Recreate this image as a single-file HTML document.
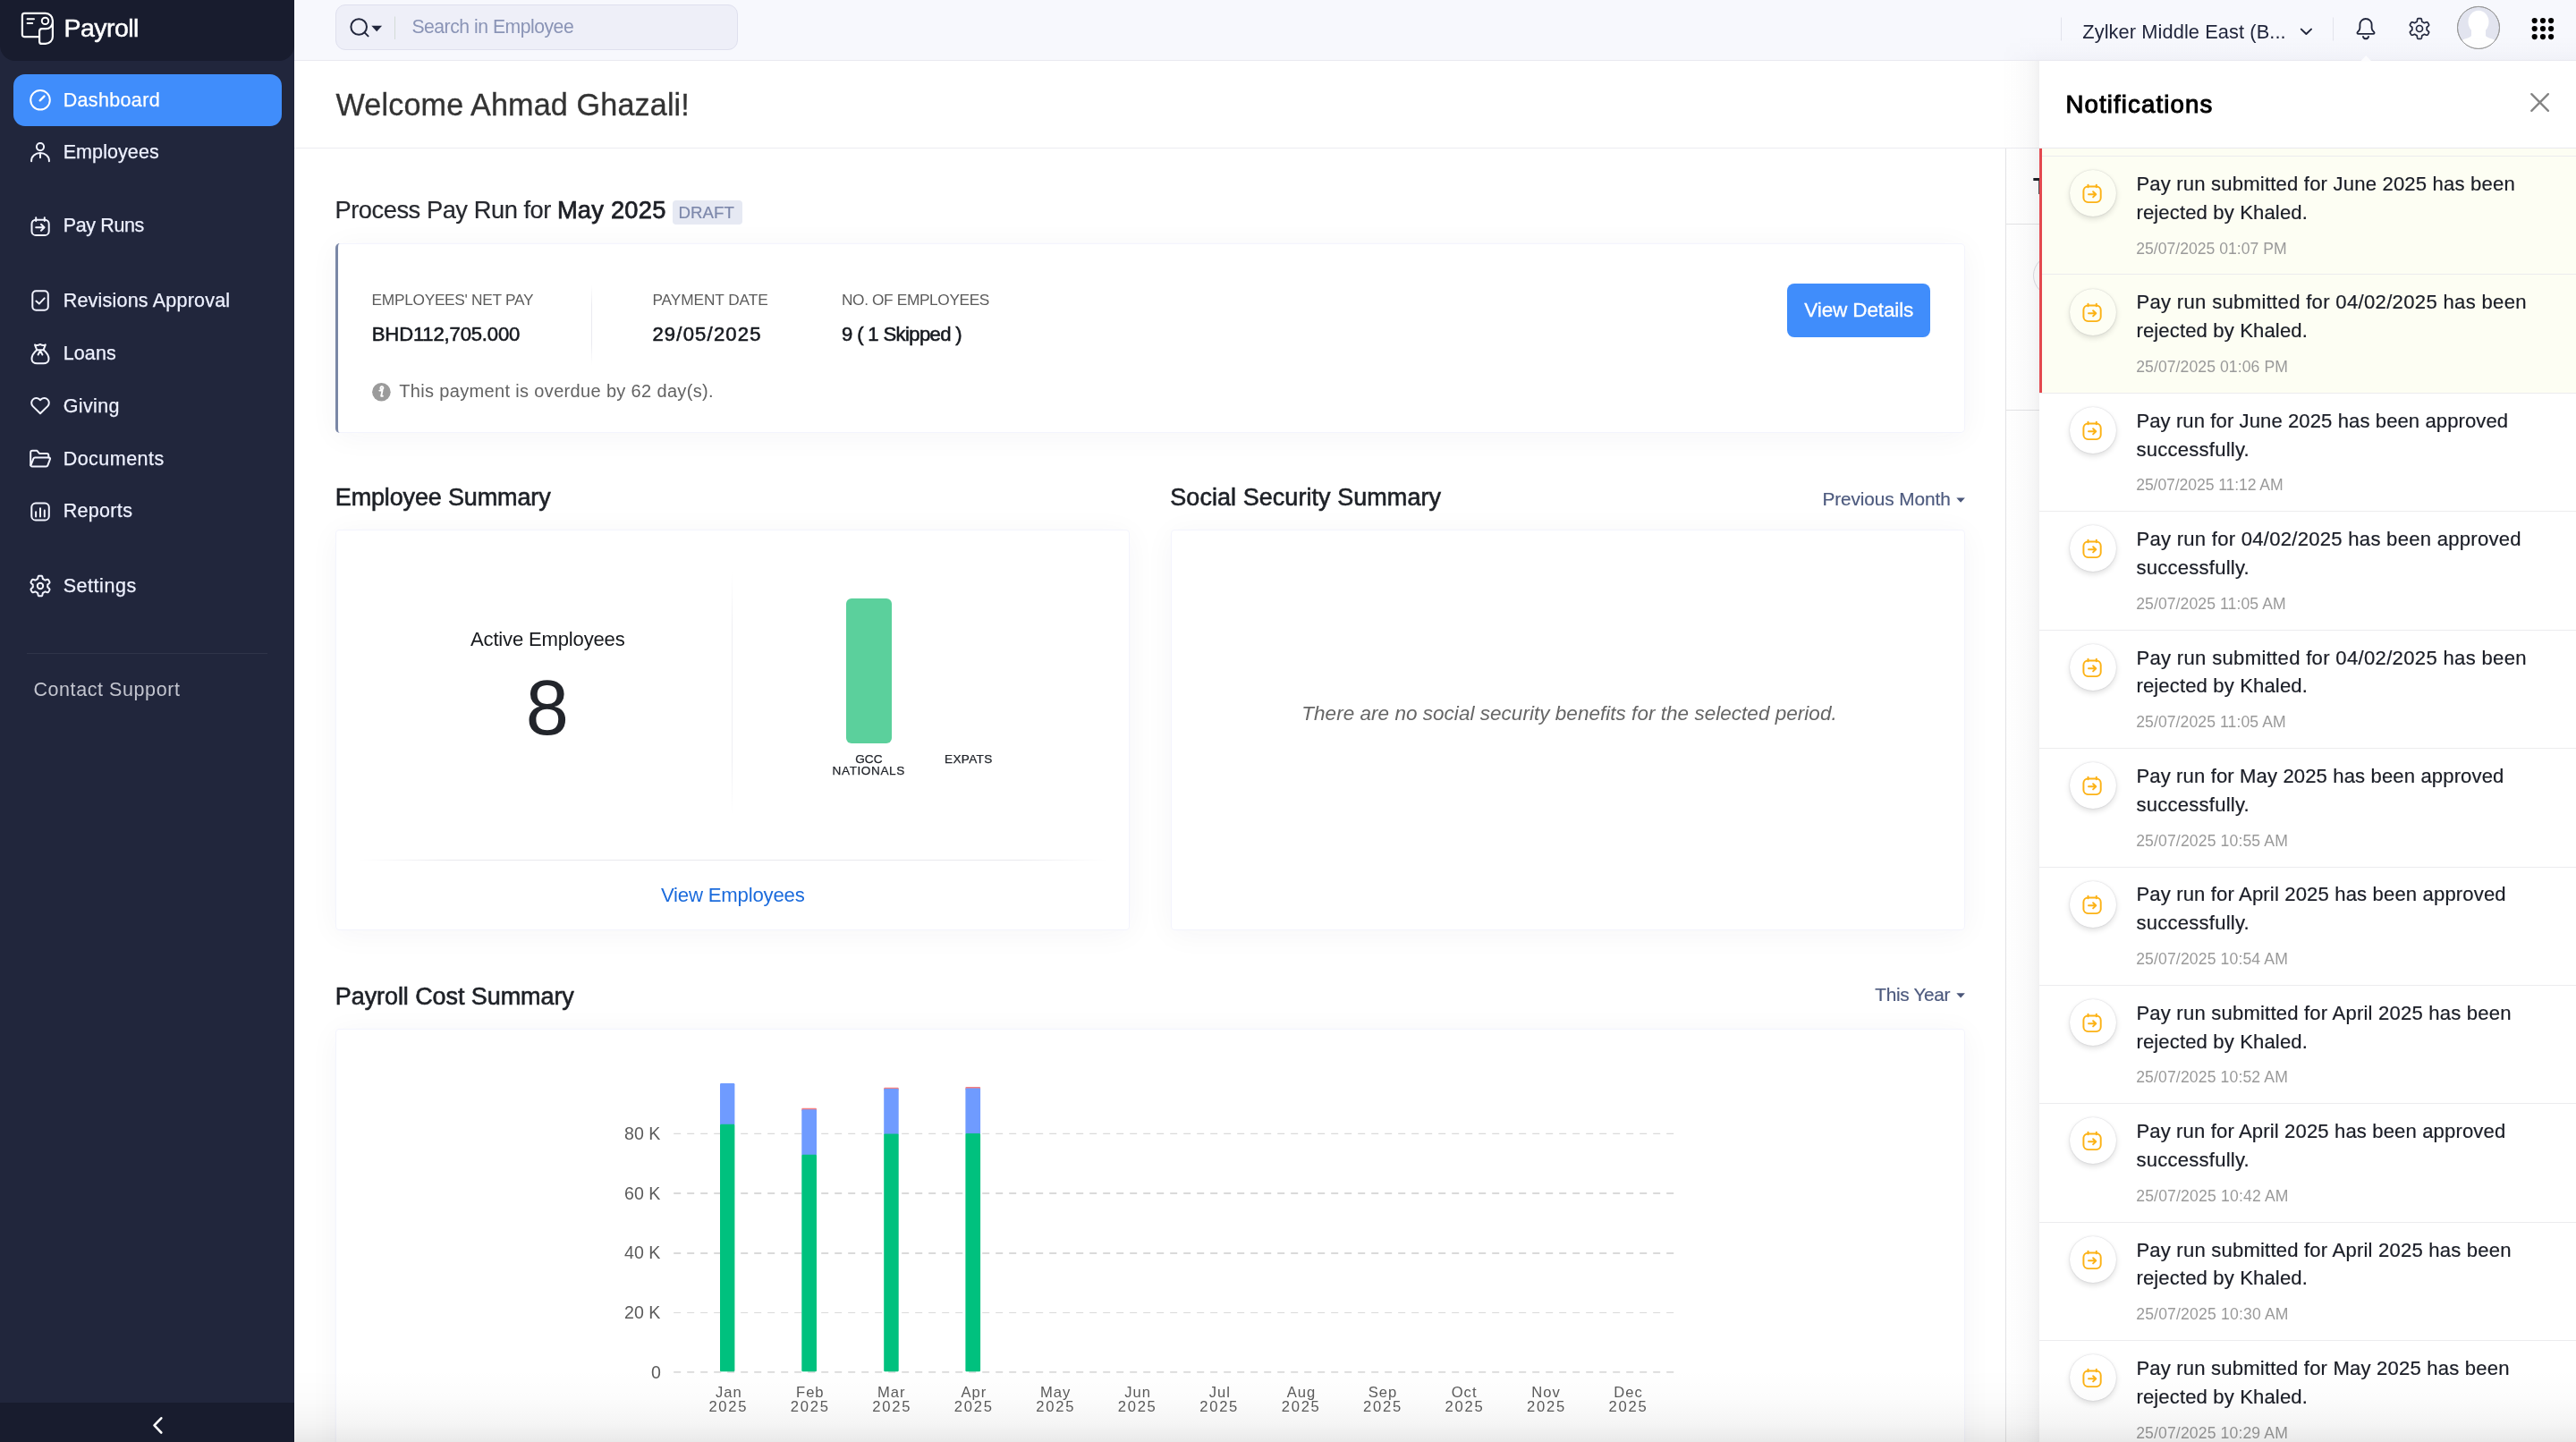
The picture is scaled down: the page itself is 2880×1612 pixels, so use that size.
<!DOCTYPE html>
<html lang="en">
<head>
<meta charset="utf-8">
<title>Payroll - Dashboard</title>
<style>
*{box-sizing:border-box}
html,body{margin:0;padding:0}
body{position:relative;width:2880px;height:1612px;overflow:hidden;background:#fff;color:#21263c;font-family:"Liberation Sans",sans-serif;font-size:22px}
.app{position:absolute;left:0;top:0;width:2880px;height:1612px;overflow:hidden;will-change:transform}
.t{position:absolute;white-space:nowrap;line-height:1;margin:0;padding:0;font-weight:400;display:block}
.b{position:absolute;display:block}
svg{position:absolute;left:0;top:0;overflow:visible}
nav,header,main,aside,section,ul,li,h1,h2,h3,p,a,button{margin:0;padding:0;list-style:none;border:0;background:none;font:inherit;text-decoration:none}
.card{position:absolute;background:#fff;border:1px solid #f3f4fd;border-radius:4px;box-shadow:0 4px 34px rgba(40,44,80,.045)}
</style>
</head>
<body>
<div class="app">
<main>
<div class="b" style="left:329px;top:68px;width:2551px;height:1544px;background:#fff"></div>
<header><h1 class="t" style="left:375.6px;top:100px;font-size:34.2px;letter-spacing:0.12px;-webkit-text-stroke:0.3px currentColor;color:#333333;">Welcome Ahmad Ghazali!</h1><div class="b" style="left:329px;top:165px;width:2551px;height:1px;background:#ececf1"></div></header>
<aside><div class="b" style="left:2242px;top:166px;width:1px;height:1446px;background:#e4e4e6"></div><div class="b" style="left:2243px;top:250px;width:637px;height:1px;background:#e4e4e6"></div><div class="b" style="left:2243px;top:458px;width:637px;height:1px;background:#e4e4e6"></div><div class="b" style="left:2273px;top:285px;width:46px;height:46px;border:1px solid #dcdce2;border-radius:50%"></div><h2 class="t" style="left:2273.0px;top:195px;font-size:26.6px;font-weight:700;color:#1d2026;">To Do Tasks</h2></aside>
<section><h2 class="t" style="left:374.4px;top:221px;font-size:27.3px;letter-spacing:-0.46px;-webkit-text-stroke:0.2px currentColor;color:#26282e;">Process Pay Run for</h2><h2 class="t" style="left:622.9px;top:221px;font-size:27.3px;letter-spacing:0.23px;-webkit-text-stroke:0.75px currentColor;color:#1d1f25;">May 2025</h2><div class="b" style="left:752px;top:224px;width:78px;height:27px;background:#e6e9f3;border-radius:4px"></div><span class="t" style="left:758.6px;top:229px;font-size:18.7px;-webkit-text-stroke:0.2px currentColor;color:#7d88ab;">DRAFT</span><div class="card" style="left:375px;top:271.5px;width:1821.5px;height:212px;border-radius:5px;border-left:0"></div><div class="b" style="left:375px;top:271.5px;width:8px;height:212px;border-left:3px solid #7a87a6;border-radius:5px 0 0 5px"></div><span class="t" style="left:415.6px;top:327px;font-size:17.3px;letter-spacing:-0.29px;color:#5b5b5b;">EMPLOYEES&#x27; NET PAY</span><span class="t" style="left:415.8px;top:363px;font-size:22.1px;letter-spacing:-0.18px;-webkit-text-stroke:0.55px currentColor;color:#16191f;">BHD112,705.000</span><div class="b" style="left:661px;top:318px;width:1px;height:90px;background:linear-gradient(180deg,#fff,#ebebf0 25%,#ebebf0 75%,#fff)"></div><span class="t" style="left:729.4px;top:327px;font-size:17.3px;letter-spacing:-0.09px;color:#5b5b5b;">PAYMENT DATE</span><span class="t" style="left:729.4px;top:363px;font-size:22.1px;letter-spacing:1.18px;-webkit-text-stroke:0.55px currentColor;color:#16191f;">29/05/2025</span><span class="t" style="left:941.0px;top:327px;font-size:17.3px;letter-spacing:-0.37px;color:#5b5b5b;">NO. OF EMPLOYEES</span><span class="t" style="left:941.0px;top:363px;font-size:22.1px;letter-spacing:-0.64px;-webkit-text-stroke:0.55px currentColor;color:#16191f;">9 ( 1 Skipped )</span><svg width="2880" height="1612" viewBox="0 0 2880 1612"><circle cx="426.4" cy="438.2" r="10.3" fill="#9b9b9b"/><path d="M426.9 432.2a1.5 1.5 0 1 0 .01 0M424.3 436.6h3.2l-1.3 6.2h1.7" fill="none" stroke="#fff" stroke-width="1.9" stroke-linecap="round" stroke-linejoin="round"/></svg><p class="t" style="left:446.3px;top:427px;font-size:20.0px;letter-spacing:0.34px;color:#626262;">This payment is overdue by 62 day(s).</p><a class="b" style="left:1998px;top:317px;width:160px;height:60px;background:#408dfb;border-radius:8px"></a><span class="t" style="left:2017.3px;top:336px;font-size:22.6px;letter-spacing:-0.17px;-webkit-text-stroke:0.3px currentColor;color:#ffffff;">View Details</span></section>
<section><h2 class="t" style="left:374.8px;top:543px;font-size:27.0px;letter-spacing:-0.15px;-webkit-text-stroke:0.6px currentColor;color:#1d2026;">Employee Summary</h2><div class="card" style="left:375px;top:592px;width:887.5px;height:448px"></div><p class="t" style="left:526.0px;top:704px;font-size:22.1px;letter-spacing:-0.19px;color:#17191d;">Active Employees</p><p class="t" style="left:587.8px;top:748px;font-size:86.5px;color:#22252b;">8</p><div class="b" style="left:818px;top:640px;width:1px;height:270px;background:linear-gradient(180deg,#fff,#efeff3 22%,#efeff3 78%,#fff)"></div><div class="b" style="left:946px;top:668.5px;width:50.5px;height:162px;background:#5bd09c;border-radius:6px"></div><span class="t" style="left:956.2px;top:842px;font-size:13.6px;letter-spacing:0.05px;-webkit-text-stroke:0.25px currentColor;color:#22252b;">GCC</span><span class="t" style="left:930.6px;top:855px;font-size:13.6px;letter-spacing:0.58px;-webkit-text-stroke:0.25px currentColor;color:#22252b;">NATIONALS</span><span class="t" style="left:1056.1px;top:842px;font-size:13.6px;letter-spacing:0.32px;-webkit-text-stroke:0.25px currentColor;color:#22252b;">EXPATS</span><div class="b" style="left:400px;top:961px;width:838px;height:1px;background:linear-gradient(90deg,#fff,#e9e9ee 12%,#e9e9ee 88%,#fff)"></div><a class="t" style="left:738.9px;top:990px;font-size:22.2px;letter-spacing:-0.21px;color:#1b6bdc;">View Employees</a></section>
<section><h2 class="t" style="left:1308.3px;top:543px;font-size:27.0px;letter-spacing:0.05px;-webkit-text-stroke:0.6px currentColor;color:#1d2026;">Social Security Summary</h2><span class="t" style="left:2037.4px;top:548px;font-size:20.8px;letter-spacing:-0.08px;-webkit-text-stroke:0.2px currentColor;color:#4d5a7e;">Previous Month</span><svg width="2880" height="1612" viewBox="0 0 2880 1612"><path d="M2187.3 556.4h9.6l-4.8 5.3z" fill="#4a5679"/></svg><div class="card" style="left:1308.5px;top:592px;width:888px;height:447.5px"></div><p class="t" style="left:1455.3px;top:787px;font-size:22.5px;font-style:italic;letter-spacing:0.03px;color:#666666;">There are no social security benefits for the selected period.</p></section>
<section><h2 class="t" style="left:374.8px;top:1101px;font-size:27.0px;letter-spacing:-0.08px;-webkit-text-stroke:0.6px currentColor;color:#1d2026;">Payroll Cost Summary</h2><span class="t" style="left:2096.3px;top:1102px;font-size:20.8px;letter-spacing:-0.31px;-webkit-text-stroke:0.2px currentColor;color:#4d5a7e;">This Year</span><svg width="2880" height="1612" viewBox="0 0 2880 1612"><path d="M2187.3 1110.2h9.6l-4.8 5.3z" fill="#4a5679"/></svg><div class="card" style="left:375px;top:1150px;width:1821.5px;height:520px"></div><svg width="2880" height="1612" viewBox="0 0 2880 1612"><path d="M753.2 1267.4H1872" stroke="#dadada" stroke-width="1.2" stroke-dasharray="8 7" fill="none"/><path d="M753.2 1334.0H1872" stroke="#dadada" stroke-width="1.8" stroke-dasharray="8 7" fill="none"/><path d="M753.2 1401.0H1872" stroke="#dadada" stroke-width="1.8" stroke-dasharray="8 7" fill="none"/><path d="M753.2 1467.5H1872" stroke="#dadada" stroke-width="1.2" stroke-dasharray="8 7" fill="none"/><path d="M753.2 1533.9H1872" stroke="#dadada" stroke-width="1.6" stroke-dasharray="8 7" fill="none"/><rect x="805.0" y="1211.1" width="16.4" height="46.6" rx="1.2" fill="#6f9bff"/><rect x="805.0" y="1256.7" width="16.4" height="276.6" rx="1.2" fill="#00c17e"/><rect x="896.3" y="1238.8" width="16.7" height="3.4" rx="1" fill="#f77f80"/><rect x="896.3" y="1240.2" width="16.7" height="51.6" rx="1.2" fill="#6f9bff"/><rect x="896.3" y="1290.8" width="16.7" height="242.5" rx="1.2" fill="#00c17e"/><rect x="988.2" y="1215.7" width="16.5" height="3.2" rx="1" fill="#f77f80"/><rect x="988.2" y="1216.9" width="16.5" height="51.5" rx="1.2" fill="#6f9bff"/><rect x="988.2" y="1267.4" width="16.5" height="265.9" rx="1.2" fill="#00c17e"/><rect x="1079.4" y="1215.0" width="16.7" height="3.6" rx="1" fill="#f77f80"/><rect x="1079.4" y="1216.6" width="16.7" height="51.3" rx="1.2" fill="#6f9bff"/><rect x="1079.4" y="1266.9" width="16.7" height="266.4" rx="1.2" fill="#00c17e"/></svg><span class="t" style="left:698.1px;top:1258px;font-size:19.6px;color:#5b5b5b;">80 K</span><span class="t" style="left:698.1px;top:1325px;font-size:19.6px;color:#5b5b5b;">60 K</span><span class="t" style="left:698.1px;top:1391px;font-size:19.6px;color:#5b5b5b;">40 K</span><span class="t" style="left:698.1px;top:1458px;font-size:19.6px;color:#5b5b5b;">20 K</span><span class="t" style="left:728.1px;top:1525px;font-size:19.6px;color:#5b5b5b;">0</span><span class="t" style="left:800.0px;top:1549px;font-size:16.6px;letter-spacing:1.00px;color:#5b5b5b;">Jan</span><span class="t" style="left:792.4px;top:1565px;font-size:16.6px;letter-spacing:1.75px;color:#5b5b5b;">2025</span><span class="t" style="left:890.0px;top:1549px;font-size:16.6px;letter-spacing:1.00px;color:#5b5b5b;">Feb</span><span class="t" style="left:883.8px;top:1565px;font-size:16.6px;letter-spacing:1.75px;color:#5b5b5b;">2025</span><span class="t" style="left:980.9px;top:1549px;font-size:16.6px;letter-spacing:1.00px;color:#5b5b5b;">Mar</span><span class="t" style="left:975.3px;top:1565px;font-size:16.6px;letter-spacing:1.75px;color:#5b5b5b;">2025</span><span class="t" style="left:1074.4px;top:1549px;font-size:16.6px;letter-spacing:1.00px;color:#5b5b5b;">Apr</span><span class="t" style="left:1066.8px;top:1565px;font-size:16.6px;letter-spacing:1.75px;color:#5b5b5b;">2025</span><span class="t" style="left:1162.9px;top:1549px;font-size:16.6px;letter-spacing:1.00px;color:#5b5b5b;">May</span><span class="t" style="left:1158.3px;top:1565px;font-size:16.6px;letter-spacing:1.75px;color:#5b5b5b;">2025</span><span class="t" style="left:1257.3px;top:1549px;font-size:16.6px;letter-spacing:1.00px;color:#5b5b5b;">Jun</span><span class="t" style="left:1249.7px;top:1565px;font-size:16.6px;letter-spacing:1.75px;color:#5b5b5b;">2025</span><span class="t" style="left:1351.8px;top:1549px;font-size:16.6px;letter-spacing:1.00px;color:#5b5b5b;">Jul</span><span class="t" style="left:1341.2px;top:1565px;font-size:16.6px;letter-spacing:1.75px;color:#5b5b5b;">2025</span><span class="t" style="left:1438.8px;top:1549px;font-size:16.6px;letter-spacing:1.00px;color:#5b5b5b;">Aug</span><span class="t" style="left:1432.7px;top:1565px;font-size:16.6px;letter-spacing:1.75px;color:#5b5b5b;">2025</span><span class="t" style="left:1529.8px;top:1549px;font-size:16.6px;letter-spacing:1.00px;color:#5b5b5b;">Sep</span><span class="t" style="left:1524.1px;top:1565px;font-size:16.6px;letter-spacing:1.75px;color:#5b5b5b;">2025</span><span class="t" style="left:1622.7px;top:1549px;font-size:16.6px;letter-spacing:1.00px;color:#5b5b5b;">Oct</span><span class="t" style="left:1615.6px;top:1565px;font-size:16.6px;letter-spacing:1.75px;color:#5b5b5b;">2025</span><span class="t" style="left:1712.2px;top:1549px;font-size:16.6px;letter-spacing:1.00px;color:#5b5b5b;">Nov</span><span class="t" style="left:1707.1px;top:1565px;font-size:16.6px;letter-spacing:1.75px;color:#5b5b5b;">2025</span><span class="t" style="left:1804.2px;top:1549px;font-size:16.6px;letter-spacing:1.00px;color:#5b5b5b;">Dec</span><span class="t" style="left:1798.5px;top:1565px;font-size:16.6px;letter-spacing:1.75px;color:#5b5b5b;">2025</span></section>
</main>
<header><div class="b" style="left:329px;top:0;width:2551px;height:68px;background:#f7f8fd;border-bottom:1px solid #e9e9f0"></div><div class="b" style="left:375px;top:5px;width:449.5px;height:51px;background:#eeeff8;border:1px solid #dfe0ee;border-radius:11px"></div><svg width="2880" height="68" viewBox="0 0 2880 68"><circle cx="401.2" cy="30" r="8.8" fill="none" stroke="#21263c" stroke-width="2"/><path d="M407.6 36.4l4 4" stroke="#21263c" stroke-width="2" stroke-linecap="round"/><path d="M415.3 28.8h11.8l-5.9 6.5z" fill="#21263c"/><path d="M441.5 18.5v25.5" stroke="#d3dbd6" stroke-width="1"/><path d="M2304.5 19.5v26M2608.5 19.5v26" stroke="#e2e3ec" stroke-width="1"/><path d="M2572.8 32.6l5.6 5.4 5.6-5.4" fill="none" stroke="#21263c" stroke-width="2" stroke-linecap="round" stroke-linejoin="round"/><path d="M2645 21a6.6 6.6 0 0 0-6.6 6.6v3.6c0 2.3-1.4 3.4-2.6 4.7-.8.9-.3 2 .9 2h16.6c1.2 0 1.7-1.1.9-2-1.2-1.3-2.600-2.400-2.600-4.700v-3.600a6.600 6.600 0 0 0-6.600-6.600z" fill="none" stroke="#21263c" stroke-width="1.85" stroke-linejoin="round"/><path d="M2642 40.9a3.1 3.1 0 0 0 6 0" fill="none" stroke="#21263c" stroke-width="2" stroke-linecap="round"/><path d="M2705.00 20.60 L2705.20 20.60 L2705.40 20.61 L2705.60 20.62 L2705.80 20.63 L2705.99 20.64 L2706.19 20.66 L2706.39 20.68 L2706.59 20.71 L2706.78 20.76 L2706.96 20.89 L2707.12 21.10 L2707.26 21.39 L2707.37 21.74 L2707.46 22.13 L2707.54 22.53 L2707.60 22.94 L2707.65 23.33 L2707.70 23.68 L2707.77 23.97 L2707.84 24.19 L2707.94 24.33 L2708.07 24.40 L2708.20 24.45 L2708.34 24.51 L2708.47 24.57 L2708.59 24.63 L2708.72 24.69 L2708.85 24.76 L2708.98 24.83 L2709.10 24.90 L2709.22 24.97 L2709.35 25.05 L2709.47 25.12 L2709.59 25.20 L2709.70 25.28 L2709.82 25.37 L2709.93 25.45 L2710.05 25.54 L2710.17 25.61 L2710.34 25.63 L2710.57 25.59 L2710.86 25.50 L2711.18 25.37 L2711.55 25.22 L2711.93 25.07 L2712.32 24.93 L2712.70 24.82 L2713.06 24.74 L2713.38 24.72 L2713.65 24.75 L2713.85 24.84 L2713.98 24.98 L2714.10 25.14 L2714.22 25.30 L2714.34 25.46 L2714.45 25.63 L2714.56 25.79 L2714.67 25.96 L2714.77 26.13 L2714.87 26.30 L2714.97 26.47 L2715.07 26.65 L2715.16 26.82 L2715.25 27.00 L2715.33 27.18 L2715.41 27.36 L2715.49 27.55 L2715.57 27.73 L2715.63 27.92 L2715.60 28.14 L2715.50 28.39 L2715.32 28.65 L2715.07 28.92 L2714.78 29.19 L2714.47 29.46 L2714.14 29.72 L2713.83 29.96 L2713.56 30.18 L2713.34 30.38 L2713.19 30.56 L2713.12 30.71 L2713.12 30.86 L2713.14 31.00 L2713.16 31.14 L2713.17 31.29 L2713.18 31.43 L2713.19 31.57 L2713.20 31.71 L2713.20 31.86 L2713.20 32.00 L2713.20 32.14 L2713.20 32.29 L2713.19 32.43 L2713.18 32.57 L2713.17 32.71 L2713.16 32.86 L2713.14 33.00 L2713.12 33.14 L2713.12 33.29 L2713.19 33.44 L2713.34 33.62 L2713.56 33.82 L2713.83 34.04 L2714.14 34.28 L2714.47 34.54 L2714.78 34.81 L2715.07 35.08 L2715.32 35.35 L2715.50 35.61 L2715.60 35.86 L2715.63 36.08 L2715.57 36.27 L2715.49 36.45 L2715.41 36.64 L2715.33 36.82 L2715.25 37.00 L2715.16 37.18 L2715.07 37.35 L2714.97 37.53 L2714.87 37.70 L2714.77 37.87 L2714.67 38.04 L2714.56 38.21 L2714.45 38.37 L2714.34 38.54 L2714.22 38.70 L2714.10 38.86 L2713.98 39.02 L2713.85 39.16 L2713.65 39.25 L2713.38 39.28 L2713.06 39.26 L2712.70 39.18 L2712.32 39.07 L2711.93 38.93 L2711.55 38.78 L2711.18 38.63 L2710.86 38.50 L2710.57 38.41 L2710.34 38.37 L2710.17 38.39 L2710.05 38.46 L2709.93 38.55 L2709.82 38.63 L2709.70 38.72 L2709.59 38.80 L2709.47 38.88 L2709.35 38.95 L2709.22 39.03 L2709.10 39.10 L2708.98 39.17 L2708.85 39.24 L2708.72 39.31 L2708.59 39.37 L2708.47 39.43 L2708.34 39.49 L2708.20 39.55 L2708.07 39.60 L2707.94 39.67 L2707.84 39.81 L2707.77 40.03 L2707.70 40.32 L2707.65 40.67 L2707.60 41.06 L2707.54 41.47 L2707.46 41.87 L2707.37 42.26 L2707.26 42.61 L2707.12 42.90 L2706.96 43.11 L2706.78 43.24 L2706.59 43.29 L2706.39 43.32 L2706.19 43.34 L2705.99 43.36 L2705.80 43.37 L2705.60 43.38 L2705.40 43.39 L2705.20 43.40 L2705.00 43.40 L2704.80 43.40 L2704.60 43.39 L2704.40 43.38 L2704.20 43.37 L2704.01 43.36 L2703.81 43.34 L2703.61 43.32 L2703.41 43.29 L2703.22 43.24 L2703.04 43.11 L2702.88 42.90 L2702.74 42.61 L2702.63 42.26 L2702.54 41.87 L2702.46 41.47 L2702.40 41.06 L2702.35 40.67 L2702.30 40.32 L2702.23 40.03 L2702.16 39.81 L2702.06 39.67 L2701.93 39.60 L2701.80 39.55 L2701.66 39.49 L2701.53 39.43 L2701.41 39.37 L2701.28 39.31 L2701.15 39.24 L2701.02 39.17 L2700.90 39.10 L2700.78 39.03 L2700.65 38.95 L2700.53 38.88 L2700.41 38.80 L2700.30 38.72 L2700.18 38.63 L2700.07 38.55 L2699.95 38.46 L2699.83 38.39 L2699.66 38.37 L2699.43 38.41 L2699.14 38.50 L2698.82 38.63 L2698.45 38.78 L2698.07 38.93 L2697.68 39.07 L2697.30 39.18 L2696.94 39.26 L2696.62 39.28 L2696.35 39.25 L2696.15 39.16 L2696.02 39.02 L2695.90 38.86 L2695.78 38.70 L2695.66 38.54 L2695.55 38.37 L2695.44 38.21 L2695.33 38.04 L2695.23 37.87 L2695.13 37.70 L2695.03 37.53 L2694.93 37.35 L2694.84 37.18 L2694.75 37.00 L2694.67 36.82 L2694.59 36.64 L2694.51 36.45 L2694.43 36.27 L2694.37 36.08 L2694.40 35.86 L2694.50 35.61 L2694.68 35.35 L2694.93 35.08 L2695.22 34.81 L2695.53 34.54 L2695.86 34.28 L2696.17 34.04 L2696.44 33.82 L2696.66 33.62 L2696.81 33.44 L2696.88 33.29 L2696.88 33.14 L2696.86 33.00 L2696.84 32.86 L2696.83 32.71 L2696.82 32.57 L2696.81 32.43 L2696.80 32.29 L2696.80 32.14 L2696.80 32.00 L2696.80 31.86 L2696.80 31.71 L2696.81 31.57 L2696.82 31.43 L2696.83 31.29 L2696.84 31.14 L2696.86 31.00 L2696.88 30.86 L2696.88 30.71 L2696.81 30.56 L2696.66 30.38 L2696.44 30.18 L2696.17 29.96 L2695.86 29.72 L2695.53 29.46 L2695.22 29.19 L2694.93 28.92 L2694.68 28.65 L2694.50 28.39 L2694.40 28.14 L2694.37 27.92 L2694.43 27.73 L2694.51 27.55 L2694.59 27.36 L2694.67 27.18 L2694.75 27.00 L2694.84 26.82 L2694.93 26.65 L2695.03 26.47 L2695.13 26.30 L2695.23 26.13 L2695.33 25.96 L2695.44 25.79 L2695.55 25.63 L2695.66 25.46 L2695.78 25.30 L2695.90 25.14 L2696.02 24.98 L2696.15 24.84 L2696.35 24.75 L2696.62 24.72 L2696.94 24.74 L2697.30 24.82 L2697.68 24.93 L2698.07 25.07 L2698.45 25.22 L2698.82 25.37 L2699.14 25.50 L2699.43 25.59 L2699.66 25.63 L2699.83 25.61 L2699.95 25.54 L2700.07 25.45 L2700.18 25.37 L2700.30 25.28 L2700.41 25.20 L2700.53 25.12 L2700.65 25.05 L2700.78 24.97 L2700.90 24.90 L2701.02 24.83 L2701.15 24.76 L2701.28 24.69 L2701.41 24.63 L2701.53 24.57 L2701.66 24.51 L2701.80 24.45 L2701.93 24.40 L2702.06 24.33 L2702.16 24.19 L2702.23 23.97 L2702.30 23.68 L2702.35 23.33 L2702.40 22.94 L2702.46 22.53 L2702.54 22.13 L2702.63 21.74 L2702.74 21.39 L2702.88 21.10 L2703.04 20.89 L2703.22 20.76 L2703.41 20.71 L2703.61 20.68 L2703.81 20.66 L2704.01 20.64 L2704.20 20.63 L2704.40 20.62 L2704.60 20.61 L2704.80 20.60Z" fill="none" stroke="#21263c" stroke-width="1.7" stroke-linejoin="round"/><circle cx="2705" cy="32" r="3.5" fill="none" stroke="#21263c" stroke-width="1.7"/><clipPath id="av"><circle cx="2771" cy="30.9" r="23.4"/></clipPath><circle cx="2771" cy="30.9" r="23.5" fill="#e2e4ef" stroke="#9a9a9a" stroke-width="1"/><g clip-path="url(#av)" fill="#fff"><ellipse cx="2771" cy="24.5" rx="11.5" ry="12.8"/><path d="M2763 32v8c-2 3-9 3-12 6v10h40v-10c-3-3-10-3-12-6v-8z"/></g><circle cx="2771" cy="30.9" r="23.5" fill="none" stroke="#9a9a9a" stroke-width="1"/><circle cx="2833.7" cy="23.1" r="3.1" fill="#000"/><circle cx="2843" cy="23.1" r="3.1" fill="#000"/><circle cx="2852.1" cy="23.1" r="3.1" fill="#000"/><circle cx="2833.7" cy="32.1" r="3.1" fill="#000"/><circle cx="2843" cy="32.1" r="3.1" fill="#000"/><circle cx="2852.1" cy="32.1" r="3.1" fill="#000"/><circle cx="2833.7" cy="41.1" r="3.1" fill="#000"/><circle cx="2843" cy="41.1" r="3.1" fill="#000"/><circle cx="2852.1" cy="41.1" r="3.1" fill="#000"/></svg><span class="t" style="left:460.4px;top:19px;font-size:21.2px;letter-spacing:-0.49px;color:#8a94b6;">Search in Employee</span><span class="t" style="left:2328.3px;top:25px;font-size:21.8px;letter-spacing:0.09px;color:#21263c;">Zylker Middle East (B...</span></header>
<nav><div class="b" style="left:0;top:0;width:329px;height:1612px;background:#21263c"></div><div class="b" style="left:0;top:0;width:329px;height:68px;background:#181c2e;border-radius:0 0 17px 17px"></div><div class="b" style="left:15px;top:83px;width:300px;height:58px;background:#408dfb;border-radius:13px"></div><div class="b" style="left:30px;top:730px;width:269px;height:1px;background:#2f3449"></div><div class="b" style="left:0;top:1568px;width:329px;height:44px;background:#181c2e"></div><svg width="329" height="1612" viewBox="0 0 329 1612" fill="none" stroke="#f2f4ff" stroke-width="2" stroke-linecap="round" stroke-linejoin="round"><g stroke="#fff" stroke-width="2.2"><path d="M44.1 41.2H27.4a2.5 2.5 0 0 1-2.5-2.5V17.4a2.500 2.500 0 0 1 2.500-2.500H50.900a8 8 0 0 1 8 8V40.900a8 8 0 0 1-8 8H46.600a2.500 2.500 0 0 1-2.500-2.500V34.900a2.800 2.800 0 0 1 2.800-2.800H51.400a7.500 7.500 0 0 0 7.500-7.500"/><path d="M30.600 21.300h7.400M30.600 25.900h5.600" stroke-width="2"/><circle cx="50.500" cy="23.400" r="3.700" stroke-width="2"/></g><g stroke="#fff"><circle cx="45" cy="111.8" r="10.8"/><path d="M44.700 112.300l4.800-4.700" stroke-width="2.400"/></g><circle cx="45" cy="164.100" r="4.100"/><path d="M35.100 180.200v-.600a9.900 8.600 0 0 1 19.800 0v.600M45 172.800v3.400"/><rect x="35.500" y="245.700" width="19.200" height="17.300" rx="4.600"/><path d="M40.200 243.200v3.800M49.800 243.200v3.800M40.200 254.300h9M46 250.800l3.500 3.500-3.500 3.500"/><rect x="36.300" y="325.300" width="17.500" height="21.400" rx="4"/><path d="M40.400 336.600l3.400 3 5.900-6.200"/><path d="M41.200 391.200c-3.400 2.900-5.700 6.600-5.700 10.100 0 3 2.500 4.900 6 4.900h7c3.500 0 6-1.900 6-4.900 0-3.500-2.300-7.200-5.700-10.100z"/><path d="M41.200 391.200l-2.200-5.800c1.700.9 3.700.9 5.900-.500 2.200 1.400 4.200 1.400 5.900.500l-2.200 5.800"/><path d="M42.600 396.500l2.400-4.500 2.400 4.500"/><path d="M45 462.300l-8.300-8.200a5.350 5.350 0 0 1 7.550-7.580l.75.750.75-.750a5.350 5.350 0 0 1 7.550 7.580z"/><path d="M34.200 520V505.800a2 2 0 0 1 2-2h5.200l2.600 3.100h8.300a2 2 0 0 1 2 2v2.600"/><path d="M34.300 520.600l3.100-8a1.900 1.900 0 0 1 1.800-1.200h15.600a1.300 1.300 0 0 1 1.200 1.800l-2.600 7a1.900 1.900 0 0 1-1.800 1.200H36.100a1.900 1.900 0 0 1-1.800-1.900z"/><rect x="35.300" y="562.500" width="19.500" height="19" rx="4.600"/><path d="M40.100 572.200v5.300M45 568.300v9.200M49.800 570.400v7.100"/><path d="M45.00 643.70 L45.20 643.70 L45.39 643.71 L45.59 643.72 L45.79 643.73 L45.98 643.74 L46.18 643.76 L46.38 643.78 L46.57 643.81 L46.77 643.85 L46.94 643.98 L47.10 644.18 L47.24 644.45 L47.36 644.78 L47.46 645.15 L47.54 645.53 L47.60 645.92 L47.66 646.29 L47.72 646.61 L47.79 646.89 L47.88 647.10 L47.98 647.24 L48.11 647.30 L48.24 647.36 L48.38 647.42 L48.51 647.48 L48.64 647.54 L48.77 647.60 L48.90 647.67 L49.02 647.74 L49.15 647.81 L49.27 647.89 L49.40 647.96 L49.52 648.04 L49.64 648.12 L49.76 648.20 L49.88 648.29 L50.00 648.37 L50.11 648.46 L50.23 648.54 L50.40 648.56 L50.63 648.53 L50.90 648.45 L51.21 648.34 L51.56 648.20 L51.93 648.07 L52.30 647.95 L52.67 647.85 L53.01 647.79 L53.32 647.77 L53.57 647.81 L53.77 647.90 L53.90 648.04 L54.02 648.20 L54.14 648.36 L54.26 648.52 L54.37 648.68 L54.48 648.85 L54.58 649.01 L54.69 649.18 L54.79 649.35 L54.88 649.52 L54.98 649.69 L55.07 649.87 L55.16 650.05 L55.24 650.22 L55.32 650.40 L55.40 650.58 L55.48 650.77 L55.54 650.96 L55.52 651.17 L55.42 651.41 L55.25 651.67 L55.03 651.93 L54.76 652.20 L54.47 652.46 L54.17 652.71 L53.88 652.95 L53.63 653.17 L53.42 653.36 L53.28 653.54 L53.21 653.70 L53.22 653.84 L53.24 653.99 L53.25 654.13 L53.27 654.28 L53.28 654.42 L53.29 654.57 L53.29 654.71 L53.30 654.86 L53.30 655.00 L53.30 655.14 L53.29 655.29 L53.29 655.43 L53.28 655.58 L53.27 655.72 L53.25 655.87 L53.24 656.01 L53.22 656.16 L53.21 656.30 L53.28 656.46 L53.42 656.64 L53.63 656.83 L53.88 657.05 L54.17 657.29 L54.47 657.54 L54.76 657.80 L55.03 658.07 L55.25 658.33 L55.42 658.59 L55.52 658.83 L55.54 659.04 L55.48 659.23 L55.40 659.42 L55.32 659.60 L55.24 659.78 L55.16 659.95 L55.07 660.13 L54.98 660.31 L54.88 660.48 L54.79 660.65 L54.69 660.82 L54.58 660.99 L54.48 661.15 L54.37 661.32 L54.26 661.48 L54.14 661.64 L54.02 661.80 L53.90 661.96 L53.77 662.10 L53.57 662.19 L53.32 662.23 L53.01 662.21 L52.67 662.15 L52.30 662.05 L51.93 661.93 L51.56 661.80 L51.21 661.66 L50.90 661.55 L50.63 661.47 L50.40 661.44 L50.23 661.46 L50.11 661.54 L50.00 661.63 L49.88 661.71 L49.76 661.80 L49.64 661.88 L49.52 661.96 L49.40 662.04 L49.27 662.11 L49.15 662.19 L49.02 662.26 L48.90 662.33 L48.77 662.40 L48.64 662.46 L48.51 662.52 L48.38 662.58 L48.24 662.64 L48.11 662.70 L47.98 662.76 L47.88 662.90 L47.79 663.11 L47.72 663.39 L47.66 663.71 L47.60 664.08 L47.54 664.47 L47.46 664.85 L47.36 665.22 L47.24 665.55 L47.10 665.82 L46.94 666.02 L46.77 666.15 L46.57 666.19 L46.38 666.22 L46.18 666.24 L45.98 666.26 L45.79 666.27 L45.59 666.28 L45.39 666.29 L45.20 666.30 L45.00 666.30 L44.80 666.30 L44.61 666.29 L44.41 666.28 L44.21 666.27 L44.02 666.26 L43.82 666.24 L43.62 666.22 L43.43 666.19 L43.23 666.15 L43.06 666.02 L42.90 665.82 L42.76 665.55 L42.64 665.22 L42.54 664.85 L42.46 664.47 L42.40 664.08 L42.34 663.71 L42.28 663.39 L42.21 663.11 L42.12 662.90 L42.02 662.76 L41.89 662.70 L41.76 662.64 L41.62 662.58 L41.49 662.52 L41.36 662.46 L41.23 662.40 L41.10 662.33 L40.98 662.26 L40.85 662.19 L40.73 662.11 L40.60 662.04 L40.48 661.96 L40.36 661.88 L40.24 661.80 L40.12 661.71 L40.00 661.63 L39.89 661.54 L39.77 661.46 L39.60 661.44 L39.37 661.47 L39.10 661.55 L38.79 661.66 L38.44 661.80 L38.07 661.93 L37.70 662.05 L37.33 662.15 L36.99 662.21 L36.68 662.23 L36.43 662.19 L36.23 662.10 L36.10 661.96 L35.98 661.80 L35.86 661.64 L35.74 661.48 L35.63 661.32 L35.52 661.15 L35.42 660.99 L35.31 660.82 L35.21 660.65 L35.12 660.48 L35.02 660.31 L34.93 660.13 L34.84 659.95 L34.76 659.78 L34.68 659.60 L34.60 659.42 L34.52 659.23 L34.46 659.04 L34.48 658.83 L34.58 658.59 L34.75 658.33 L34.97 658.07 L35.24 657.80 L35.53 657.54 L35.83 657.29 L36.12 657.05 L36.37 656.83 L36.58 656.64 L36.72 656.46 L36.79 656.30 L36.78 656.16 L36.76 656.01 L36.75 655.87 L36.73 655.72 L36.72 655.58 L36.71 655.43 L36.71 655.29 L36.70 655.14 L36.70 655.00 L36.70 654.86 L36.71 654.71 L36.71 654.57 L36.72 654.42 L36.73 654.28 L36.75 654.13 L36.76 653.99 L36.78 653.84 L36.79 653.70 L36.72 653.54 L36.58 653.36 L36.37 653.17 L36.12 652.95 L35.83 652.71 L35.53 652.46 L35.24 652.20 L34.97 651.93 L34.75 651.67 L34.58 651.41 L34.48 651.17 L34.46 650.96 L34.52 650.77 L34.60 650.58 L34.68 650.40 L34.76 650.22 L34.84 650.05 L34.93 649.87 L35.02 649.69 L35.12 649.52 L35.21 649.35 L35.31 649.18 L35.42 649.01 L35.52 648.85 L35.63 648.68 L35.74 648.52 L35.86 648.36 L35.98 648.20 L36.10 648.04 L36.23 647.90 L36.43 647.81 L36.68 647.77 L36.99 647.79 L37.33 647.85 L37.70 647.95 L38.07 648.07 L38.44 648.20 L38.79 648.34 L39.10 648.45 L39.37 648.53 L39.60 648.56 L39.77 648.54 L39.89 648.46 L40.00 648.37 L40.12 648.29 L40.24 648.20 L40.36 648.12 L40.48 648.04 L40.60 647.96 L40.73 647.89 L40.85 647.81 L40.98 647.74 L41.10 647.67 L41.23 647.60 L41.36 647.54 L41.49 647.48 L41.62 647.42 L41.76 647.36 L41.89 647.30 L42.02 647.24 L42.12 647.10 L42.21 646.89 L42.28 646.61 L42.34 646.29 L42.40 645.92 L42.46 645.53 L42.54 645.15 L42.64 644.78 L42.76 644.45 L42.90 644.18 L43.06 643.98 L43.23 643.85 L43.43 643.81 L43.62 643.78 L43.82 643.76 L44.02 643.74 L44.21 643.73 L44.41 643.72 L44.61 643.71 L44.80 643.70Z" fill="none" stroke="#f2f4ff" stroke-width="2" stroke-linejoin="round"/><circle cx="45" cy="655" r="3.2" fill="none" stroke="#f2f4ff" stroke-width="2"/><path d="M180.300 1585.300l-7.800 8.100 7.800 8.100" stroke="#fff" stroke-width="2.600"/></svg><span class="t" style="left:71.4px;top:17px;font-size:28.5px;letter-spacing:-0.52px;-webkit-text-stroke:0.5px currentColor;color:#ffffff;">Payroll</span><ul><li><a class="t" style="left:70.7px;top:102px;font-size:21.5px;letter-spacing:0.34px;-webkit-text-stroke:0.25px currentColor;color:#ffffff;">Dashboard</a></li><li><a class="t" style="left:70.7px;top:160px;font-size:21.5px;letter-spacing:0.08px;-webkit-text-stroke:0.25px currentColor;color:#eef1ff;">Employees</a></li><li><a class="t" style="left:70.7px;top:242px;font-size:21.5px;letter-spacing:-0.37px;-webkit-text-stroke:0.25px currentColor;color:#eef1ff;">Pay Runs</a></li><li><a class="t" style="left:70.7px;top:326px;font-size:21.5px;letter-spacing:0.21px;-webkit-text-stroke:0.25px currentColor;color:#eef1ff;">Revisions Approval</a></li><li><a class="t" style="left:70.7px;top:385px;font-size:21.5px;letter-spacing:0.12px;-webkit-text-stroke:0.25px currentColor;color:#eef1ff;">Loans</a></li><li><a class="t" style="left:70.7px;top:444px;font-size:21.5px;letter-spacing:0.36px;-webkit-text-stroke:0.25px currentColor;color:#eef1ff;">Giving</a></li><li><a class="t" style="left:70.7px;top:503px;font-size:21.5px;letter-spacing:0.47px;-webkit-text-stroke:0.25px currentColor;color:#eef1ff;">Documents</a></li><li><a class="t" style="left:70.7px;top:561px;font-size:21.5px;letter-spacing:0.32px;-webkit-text-stroke:0.25px currentColor;color:#eef1ff;">Reports</a></li><li><a class="t" style="left:70.7px;top:645px;font-size:21.5px;letter-spacing:0.54px;-webkit-text-stroke:0.25px currentColor;color:#eef1ff;">Settings</a></li></ul><a class="t" style="left:37.4px;top:761px;font-size:21.5px;letter-spacing:0.58px;color:#c3c5cf;">Contact Support</a></nav>
<aside><div class="b" style="left:2236px;top:68px;width:44px;height:1544px;background:linear-gradient(90deg,rgba(20,20,30,0) 0%,rgba(20,20,30,.006) 35%,rgba(20,20,30,.02) 65%,rgba(20,20,30,.04) 88%,rgba(20,20,30,.06) 100%)"></div><div class="b" style="left:2236px;top:40px;width:644px;height:27px;background:linear-gradient(180deg,rgba(20,20,60,0) 0%,rgba(20,20,60,.006) 40%,rgba(20,20,60,.016) 75%,rgba(20,20,60,.028) 100%);-webkit-mask-image:linear-gradient(90deg,transparent 0,#000 44px);mask-image:linear-gradient(90deg,transparent 0,#000 44px)"></div><div class="b" style="left:2280px;top:68px;width:600px;height:1544px;background:#fff"></div><svg width="2880" height="70" viewBox="0 0 2880 70"><path d="M2639 68.500l6.200-6.300 6.200 6.300z" fill="#fcfcfe"/></svg><h2 class="t" style="left:2309.4px;top:103px;font-size:27.6px;letter-spacing:1.14px;-webkit-text-stroke:1.0px currentColor;color:#000000;">Notifications</h2><svg width="2880" height="200" viewBox="0 0 2880 200"><path d="M2830.300 105.200l18.600 18.600M2848.900 105.200l-18.600 18.600" stroke="#858585" stroke-width="2.400" stroke-linecap="round" fill="none"/></svg><div class="b" style="left:2280px;top:165px;width:600px;height:1px;background:#e9e9ee"></div><div class="b" style="left:2280px;top:166px;width:600px;height:273px;background:#fdfef3;border-left:3px solid #e4494f"></div><ul><li><div class="b" style="left:2283px;top:174px;width:600px;height:1px;background:#ececee"></div><div class="b" style="left:2313.5px;top:190px;width:52px;height:52px;border-radius:50%;background:#fdfef4;box-shadow:0 3px 6px rgba(0,0,0,.13),0 0 1.5px rgba(30,30,60,.22)"></div><svg width="2880" height="1612" viewBox="0 0 2880 1612"><g fill="none" stroke="#fcb216" stroke-width="1.95" stroke-linecap="round" stroke-linejoin="round"><rect x="2329.40" y="208.50" width="19.3" height="17.6" rx="5"/><path d="M2334.50 206.60V209.20M2343.80 206.60V209.20"/><path d="M2335.00 217.30H2342.90M2340.10 214.20L2343.30 217.30L2340.10 220.40"/></g></svg><p class="t" style="left:2388.4px;top:195px;font-size:22.1px;letter-spacing:0.18px;-webkit-text-stroke:0.2px currentColor;color:#1a1d26;">Pay run submitted for June 2025 has been</p><p class="t" style="left:2388.4px;top:227px;font-size:22.1px;letter-spacing:0.13px;-webkit-text-stroke:0.2px currentColor;color:#1a1d26;">rejected by Khaled.</p><time class="t" style="left:2388.2px;top:270px;font-size:17.6px;letter-spacing:0.01px;color:#9a9a9a;">25/07/2025 01:07 PM</time></li><li><div class="b" style="left:2283px;top:306px;width:600px;height:1px;background:#ececee"></div><div class="b" style="left:2313.5px;top:323px;width:52px;height:52px;border-radius:50%;background:#fdfef4;box-shadow:0 3px 6px rgba(0,0,0,.13),0 0 1.5px rgba(30,30,60,.22)"></div><svg width="2880" height="1612" viewBox="0 0 2880 1612"><g fill="none" stroke="#fcb216" stroke-width="1.95" stroke-linecap="round" stroke-linejoin="round"><rect x="2329.40" y="341.50" width="19.3" height="17.6" rx="5"/><path d="M2334.50 339.60V342.20M2343.80 339.60V342.20"/><path d="M2335.00 350.30H2342.90M2340.10 347.20L2343.30 350.30L2340.10 353.40"/></g></svg><p class="t" style="left:2388.4px;top:327px;font-size:22.1px;letter-spacing:0.31px;-webkit-text-stroke:0.2px currentColor;color:#1a1d26;">Pay run submitted for 04/02/2025 has been</p><p class="t" style="left:2388.4px;top:359px;font-size:22.1px;letter-spacing:0.13px;-webkit-text-stroke:0.2px currentColor;color:#1a1d26;">rejected by Khaled.</p><time class="t" style="left:2388.2px;top:402px;font-size:17.6px;letter-spacing:0.08px;color:#9a9a9a;">25/07/2025 01:06 PM</time></li><li><div class="b" style="left:2280px;top:439px;width:600px;height:1px;background:#ececee"></div><div class="b" style="left:2313.5px;top:455px;width:52px;height:52px;border-radius:50%;background:#fff;box-shadow:0 3px 6px rgba(0,0,0,.13),0 0 1.5px rgba(30,30,60,.22)"></div><svg width="2880" height="1612" viewBox="0 0 2880 1612"><g fill="none" stroke="#fcb216" stroke-width="1.95" stroke-linecap="round" stroke-linejoin="round"><rect x="2329.40" y="473.50" width="19.3" height="17.6" rx="5"/><path d="M2334.50 471.60V474.20M2343.80 471.60V474.20"/><path d="M2335.00 482.30H2342.90M2340.10 479.20L2343.30 482.30L2340.10 485.40"/></g></svg><p class="t" style="left:2388.4px;top:460px;font-size:22.1px;letter-spacing:0.08px;-webkit-text-stroke:0.2px currentColor;color:#1a1d26;">Pay run for June 2025 has been approved</p><p class="t" style="left:2388.4px;top:492px;font-size:22.1px;letter-spacing:0.23px;-webkit-text-stroke:0.2px currentColor;color:#1a1d26;">successfully.</p><time class="t" style="left:2388.2px;top:534px;font-size:17.6px;letter-spacing:-0.09px;color:#9a9a9a;">25/07/2025 11:12 AM</time></li><li><div class="b" style="left:2280px;top:571px;width:600px;height:1px;background:#ececee"></div><div class="b" style="left:2313.5px;top:587px;width:52px;height:52px;border-radius:50%;background:#fff;box-shadow:0 3px 6px rgba(0,0,0,.13),0 0 1.5px rgba(30,30,60,.22)"></div><svg width="2880" height="1612" viewBox="0 0 2880 1612"><g fill="none" stroke="#fcb216" stroke-width="1.95" stroke-linecap="round" stroke-linejoin="round"><rect x="2329.40" y="605.50" width="19.3" height="17.6" rx="5"/><path d="M2334.50 603.60V606.20M2343.80 603.60V606.20"/><path d="M2335.00 614.30H2342.90M2340.10 611.20L2343.30 614.30L2340.10 617.40"/></g></svg><p class="t" style="left:2388.4px;top:592px;font-size:22.1px;letter-spacing:0.26px;-webkit-text-stroke:0.2px currentColor;color:#1a1d26;">Pay run for 04/02/2025 has been approved</p><p class="t" style="left:2388.4px;top:624px;font-size:22.1px;letter-spacing:0.23px;-webkit-text-stroke:0.2px currentColor;color:#1a1d26;">successfully.</p><time class="t" style="left:2388.2px;top:667px;font-size:17.6px;letter-spacing:0.08px;color:#9a9a9a;">25/07/2025 11:05 AM</time></li><li><div class="b" style="left:2280px;top:704px;width:600px;height:1px;background:#ececee"></div><div class="b" style="left:2313.5px;top:720px;width:52px;height:52px;border-radius:50%;background:#fff;box-shadow:0 3px 6px rgba(0,0,0,.13),0 0 1.5px rgba(30,30,60,.22)"></div><svg width="2880" height="1612" viewBox="0 0 2880 1612"><g fill="none" stroke="#fcb216" stroke-width="1.95" stroke-linecap="round" stroke-linejoin="round"><rect x="2329.40" y="738.50" width="19.3" height="17.6" rx="5"/><path d="M2334.50 736.60V739.20M2343.80 736.60V739.20"/><path d="M2335.00 747.30H2342.90M2340.10 744.20L2343.30 747.30L2340.10 750.40"/></g></svg><p class="t" style="left:2388.4px;top:725px;font-size:22.1px;letter-spacing:0.31px;-webkit-text-stroke:0.2px currentColor;color:#1a1d26;">Pay run submitted for 04/02/2025 has been</p><p class="t" style="left:2388.4px;top:756px;font-size:22.1px;letter-spacing:0.13px;-webkit-text-stroke:0.2px currentColor;color:#1a1d26;">rejected by Khaled.</p><time class="t" style="left:2388.2px;top:799px;font-size:17.6px;letter-spacing:0.08px;color:#9a9a9a;">25/07/2025 11:05 AM</time></li><li><div class="b" style="left:2280px;top:836px;width:600px;height:1px;background:#ececee"></div><div class="b" style="left:2313.5px;top:852px;width:52px;height:52px;border-radius:50%;background:#fff;box-shadow:0 3px 6px rgba(0,0,0,.13),0 0 1.5px rgba(30,30,60,.22)"></div><svg width="2880" height="1612" viewBox="0 0 2880 1612"><g fill="none" stroke="#fcb216" stroke-width="1.95" stroke-linecap="round" stroke-linejoin="round"><rect x="2329.40" y="870.50" width="19.3" height="17.6" rx="5"/><path d="M2334.50 868.60V871.20M2343.80 868.60V871.20"/><path d="M2335.00 879.30H2342.90M2340.10 876.20L2343.30 879.30L2340.10 882.40"/></g></svg><p class="t" style="left:2388.4px;top:857px;font-size:22.1px;letter-spacing:0.12px;-webkit-text-stroke:0.2px currentColor;color:#1a1d26;">Pay run for May 2025 has been approved</p><p class="t" style="left:2388.4px;top:889px;font-size:22.1px;letter-spacing:0.23px;-webkit-text-stroke:0.2px currentColor;color:#1a1d26;">successfully.</p><time class="t" style="left:2388.2px;top:932px;font-size:17.6px;letter-spacing:0.13px;color:#9a9a9a;">25/07/2025 10:55 AM</time></li><li><div class="b" style="left:2280px;top:969px;width:600px;height:1px;background:#ececee"></div><div class="b" style="left:2313.5px;top:985px;width:52px;height:52px;border-radius:50%;background:#fff;box-shadow:0 3px 6px rgba(0,0,0,.13),0 0 1.5px rgba(30,30,60,.22)"></div><svg width="2880" height="1612" viewBox="0 0 2880 1612"><g fill="none" stroke="#fcb216" stroke-width="1.95" stroke-linecap="round" stroke-linejoin="round"><rect x="2329.40" y="1003.50" width="19.3" height="17.6" rx="5"/><path d="M2334.50 1001.60V1004.20M2343.80 1001.60V1004.20"/><path d="M2335.00 1012.30H2342.90M2340.10 1009.20L2343.30 1012.30L2340.10 1015.40"/></g></svg><p class="t" style="left:2388.4px;top:989px;font-size:22.1px;letter-spacing:0.14px;-webkit-text-stroke:0.2px currentColor;color:#1a1d26;">Pay run for April 2025 has been approved</p><p class="t" style="left:2388.4px;top:1021px;font-size:22.1px;letter-spacing:0.23px;-webkit-text-stroke:0.2px currentColor;color:#1a1d26;">successfully.</p><time class="t" style="left:2388.2px;top:1064px;font-size:17.6px;letter-spacing:0.13px;color:#9a9a9a;">25/07/2025 10:54 AM</time></li><li><div class="b" style="left:2280px;top:1101px;width:600px;height:1px;background:#ececee"></div><div class="b" style="left:2313.5px;top:1117px;width:52px;height:52px;border-radius:50%;background:#fff;box-shadow:0 3px 6px rgba(0,0,0,.13),0 0 1.5px rgba(30,30,60,.22)"></div><svg width="2880" height="1612" viewBox="0 0 2880 1612"><g fill="none" stroke="#fcb216" stroke-width="1.95" stroke-linecap="round" stroke-linejoin="round"><rect x="2329.40" y="1135.50" width="19.3" height="17.6" rx="5"/><path d="M2334.50 1133.60V1136.20M2343.80 1133.60V1136.20"/><path d="M2335.00 1144.30H2342.90M2340.10 1141.20L2343.30 1144.30L2340.10 1147.40"/></g></svg><p class="t" style="left:2388.4px;top:1122px;font-size:22.1px;letter-spacing:0.19px;-webkit-text-stroke:0.2px currentColor;color:#1a1d26;">Pay run submitted for April 2025 has been</p><p class="t" style="left:2388.4px;top:1154px;font-size:22.1px;letter-spacing:0.13px;-webkit-text-stroke:0.2px currentColor;color:#1a1d26;">rejected by Khaled.</p><time class="t" style="left:2388.2px;top:1196px;font-size:17.6px;letter-spacing:0.13px;color:#9a9a9a;">25/07/2025 10:52 AM</time></li><li><div class="b" style="left:2280px;top:1233px;width:600px;height:1px;background:#ececee"></div><div class="b" style="left:2313.5px;top:1249px;width:52px;height:52px;border-radius:50%;background:#fff;box-shadow:0 3px 6px rgba(0,0,0,.13),0 0 1.5px rgba(30,30,60,.22)"></div><svg width="2880" height="1612" viewBox="0 0 2880 1612"><g fill="none" stroke="#fcb216" stroke-width="1.95" stroke-linecap="round" stroke-linejoin="round"><rect x="2329.40" y="1267.50" width="19.3" height="17.6" rx="5"/><path d="M2334.50 1265.60V1268.20M2343.80 1265.60V1268.20"/><path d="M2335.00 1276.30H2342.90M2340.10 1273.20L2343.30 1276.30L2340.10 1279.40"/></g></svg><p class="t" style="left:2388.4px;top:1254px;font-size:22.1px;letter-spacing:0.13px;-webkit-text-stroke:0.2px currentColor;color:#1a1d26;">Pay run for April 2025 has been approved</p><p class="t" style="left:2388.4px;top:1286px;font-size:22.1px;letter-spacing:0.23px;-webkit-text-stroke:0.2px currentColor;color:#1a1d26;">successfully.</p><time class="t" style="left:2388.2px;top:1329px;font-size:17.6px;letter-spacing:0.17px;color:#9a9a9a;">25/07/2025 10:42 AM</time></li><li><div class="b" style="left:2280px;top:1366px;width:600px;height:1px;background:#ececee"></div><div class="b" style="left:2313.5px;top:1382px;width:52px;height:52px;border-radius:50%;background:#fff;box-shadow:0 3px 6px rgba(0,0,0,.13),0 0 1.5px rgba(30,30,60,.22)"></div><svg width="2880" height="1612" viewBox="0 0 2880 1612"><g fill="none" stroke="#fcb216" stroke-width="1.95" stroke-linecap="round" stroke-linejoin="round"><rect x="2329.40" y="1400.50" width="19.3" height="17.6" rx="5"/><path d="M2334.50 1398.60V1401.20M2343.80 1398.60V1401.20"/><path d="M2335.00 1409.30H2342.90M2340.10 1406.20L2343.30 1409.30L2340.10 1412.40"/></g></svg><p class="t" style="left:2388.4px;top:1387px;font-size:22.1px;letter-spacing:0.19px;-webkit-text-stroke:0.2px currentColor;color:#1a1d26;">Pay run submitted for April 2025 has been</p><p class="t" style="left:2388.4px;top:1418px;font-size:22.1px;letter-spacing:0.13px;-webkit-text-stroke:0.2px currentColor;color:#1a1d26;">rejected by Khaled.</p><time class="t" style="left:2388.2px;top:1461px;font-size:17.6px;letter-spacing:0.17px;color:#9a9a9a;">25/07/2025 10:30 AM</time></li><li><div class="b" style="left:2280px;top:1498px;width:600px;height:1px;background:#ececee"></div><div class="b" style="left:2313.5px;top:1514px;width:52px;height:52px;border-radius:50%;background:#fff;box-shadow:0 3px 6px rgba(0,0,0,.13),0 0 1.5px rgba(30,30,60,.22)"></div><svg width="2880" height="1612" viewBox="0 0 2880 1612"><g fill="none" stroke="#fcb216" stroke-width="1.95" stroke-linecap="round" stroke-linejoin="round"><rect x="2329.40" y="1532.50" width="19.3" height="17.6" rx="5"/><path d="M2334.50 1530.60V1533.20M2343.80 1530.60V1533.20"/><path d="M2335.00 1541.30H2342.90M2340.10 1538.20L2343.30 1541.30L2340.10 1544.40"/></g></svg><p class="t" style="left:2388.4px;top:1519px;font-size:22.1px;letter-spacing:0.18px;-webkit-text-stroke:0.2px currentColor;color:#1a1d26;">Pay run submitted for May 2025 has been</p><p class="t" style="left:2388.4px;top:1551px;font-size:22.1px;letter-spacing:0.13px;-webkit-text-stroke:0.2px currentColor;color:#1a1d26;">rejected by Khaled.</p><time class="t" style="left:2388.2px;top:1594px;font-size:17.6px;letter-spacing:0.13px;color:#9a9a9a;">25/07/2025 10:29 AM</time></li></ul></aside>
<div class="b" style="left:329px;top:1530px;width:2551px;height:82px;background:linear-gradient(180deg,rgba(0,0,0,0) 0%,rgba(0,0,0,.012) 40%,rgba(0,0,0,.04) 75%,rgba(0,0,0,.085) 100%)"></div>
</div>
<script>(function(){var w=window.innerWidth||2880;if(Math.abs(w-2880)>1){var s=w/2880,a=document.querySelector(".app");a.style.transformOrigin="0 0";a.style.transform="scale("+s+")";document.body.style.width=w+"px";document.body.style.height=Math.round(1612*s)+"px";}})();</script>
</body>
</html>
